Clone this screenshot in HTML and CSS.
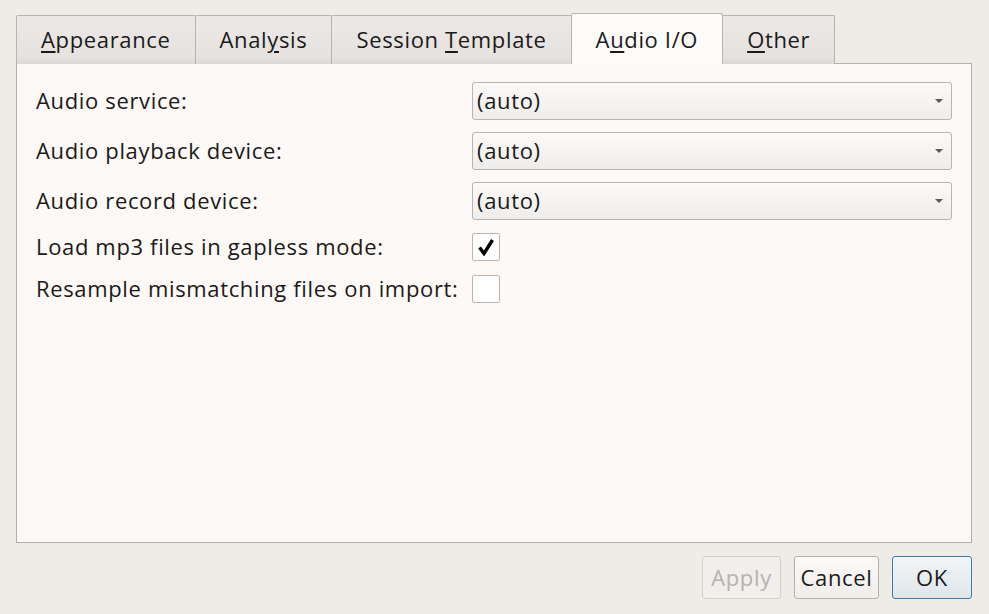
FILE: index.html
```html
<!DOCTYPE html>
<html>
<head>
<meta charset="utf-8">
<link rel="stylesheet" href="styles.css">
</head>
<body>
<div class="dialog">
  <div class="tabs">
    <div class="tab"><span><u>A</u>ppearance</span></div>
    <div class="tab"><span>Anal<u>y</u>sis</span></div>
    <div class="tab"><span>Session <u>T</u>emplate</span></div>
    <div class="tab active"><span>A<u>u</u>dio I/O</span></div>
    <div class="tab"><span><u>O</u>ther</span></div>
  </div>
  <div class="panel">
    <div class="form">
      <div class="label">Audio service:</div>
      <div class="combo"><span>(auto)</span><span class="arrow"></span></div>
      <div class="label">Audio playback device:</div>
      <div class="combo"><span>(auto)</span><span class="arrow"></span></div>
      <div class="label">Audio record device:</div>
      <div class="combo"><span>(auto)</span><span class="arrow"></span></div>
      <div class="label short">Load mp3 files in gapless mode:</div>
      <div class="check-cell"><div class="check">
        <svg width="18" height="18" viewBox="0 0 18 18"><path d="M2.5 9.5 L7 15.5 L15.5 2" fill="none" stroke="#000" stroke-width="3.4" stroke-linejoin="miter" stroke-linecap="butt"/></svg>
      </div></div>
      <div class="label short">Resample mismatching files on import:</div>
      <div class="check-cell"><div class="check"></div></div>
    </div>
  </div>
  <div class="buttons">
    <button class="btn apply" disabled>Apply</button>
    <button class="btn cancel">Cancel</button>
    <button class="btn default">OK</button>
  </div>
</div>
</body>
</html>
```
FILE: styles.css
```css
* { box-sizing: border-box; }
html, body {
  margin: 0;
  background: #efebe7;
}
body {
  font-family: "Open Sans", "Noto Sans", sans-serif;
  font-size: 22px;
  letter-spacing: 0.65px;
  color: #1b1a19;
  width: 989px;
  height: 614px;
  overflow: hidden;
}
.dialog {
  padding: 13px 17px 0 16px;
}
.tabs {
  display: flex;
  align-items: flex-end;
  height: 51px;
  position: relative;
  z-index: 1;
  margin-bottom: -1px;
}
.tab {
  height: 49px;
  padding: 0 24px 2px;
  display: flex;
  align-items: center;
  border: 1px solid #b9b4af;
  border-bottom: none;
  border-radius: 2px 2px 0 0;
  background: linear-gradient(#ebe8e5, #e5e2df 85%, #dcd8d4);
  margin-left: -1px;
  white-space: nowrap;
}
.tab:first-child { margin-left: 0; }
.tab.active {
  height: 51px;
  background: #fdfbf9;
  position: relative;
  z-index: 2;
  padding-top: 2px;
  padding-bottom: 2px;
}
.tab u {
  text-decoration: underline;
  text-decoration-thickness: 1.5px;
  text-underline-offset: 3px;
}
.panel {
  height: 480px;
  border: 1px solid #b4afaa;
  background: #fcf9f6;
  padding: 18px 19px 0 19px;
}
.form {
  display: grid;
  grid-template-columns: 436px 1fr;
  row-gap: 12px;
}
.label {
  display: flex;
  align-items: center;
  height: 38px;
  padding-bottom: 2px;
  white-space: nowrap;
}
.label.short { height: 30px; }
.combo {
  height: 38px;
  border: 1px solid #b9b4af;
  border-radius: 3px;
  background: linear-gradient(#fbfaf9, #efedeb);
  display: flex;
  align-items: center;
  justify-content: space-between;
  padding: 0 8px 2px 4px;
}
.arrow {
  width: 0;
  height: 0;
  margin-top: 2px;
  border-left: 4px solid transparent;
  border-right: 4px solid transparent;
  border-top: 4px solid #5a5856;
}
.check-cell {
  height: 30px;
  display: flex;
  align-items: center;
}
.check {
  width: 28px;
  height: 28px;
  border: 1px solid #bab5b0;
  border-radius: 2px;
  background: #fefefe;
  display: flex;
  align-items: center;
  justify-content: center;
}
.buttons {
  display: flex;
  justify-content: flex-end;
  gap: 13px;
  margin-top: 13px;
}
.btn {
  font: inherit;
  letter-spacing: inherit;
  color: #1b1a19;
  height: 43px;
  padding: 0 0 2px;
  border: 1px solid #b5b0ab;
  border-radius: 3px;
  background: linear-gradient(#fbfaf9, #efedeb);
}
.btn.apply {
  color: #b6b2ae;
  border-color: #d3cfcb;
  background: #f1eeeb;
  width: 79px;
}
.btn.cancel { width: 85px; }
.btn.default {
  border-color: #3b7cb8;
  background: linear-gradient(#f3f5f6, #dfe5e9);
  width: 80px;
}
```
